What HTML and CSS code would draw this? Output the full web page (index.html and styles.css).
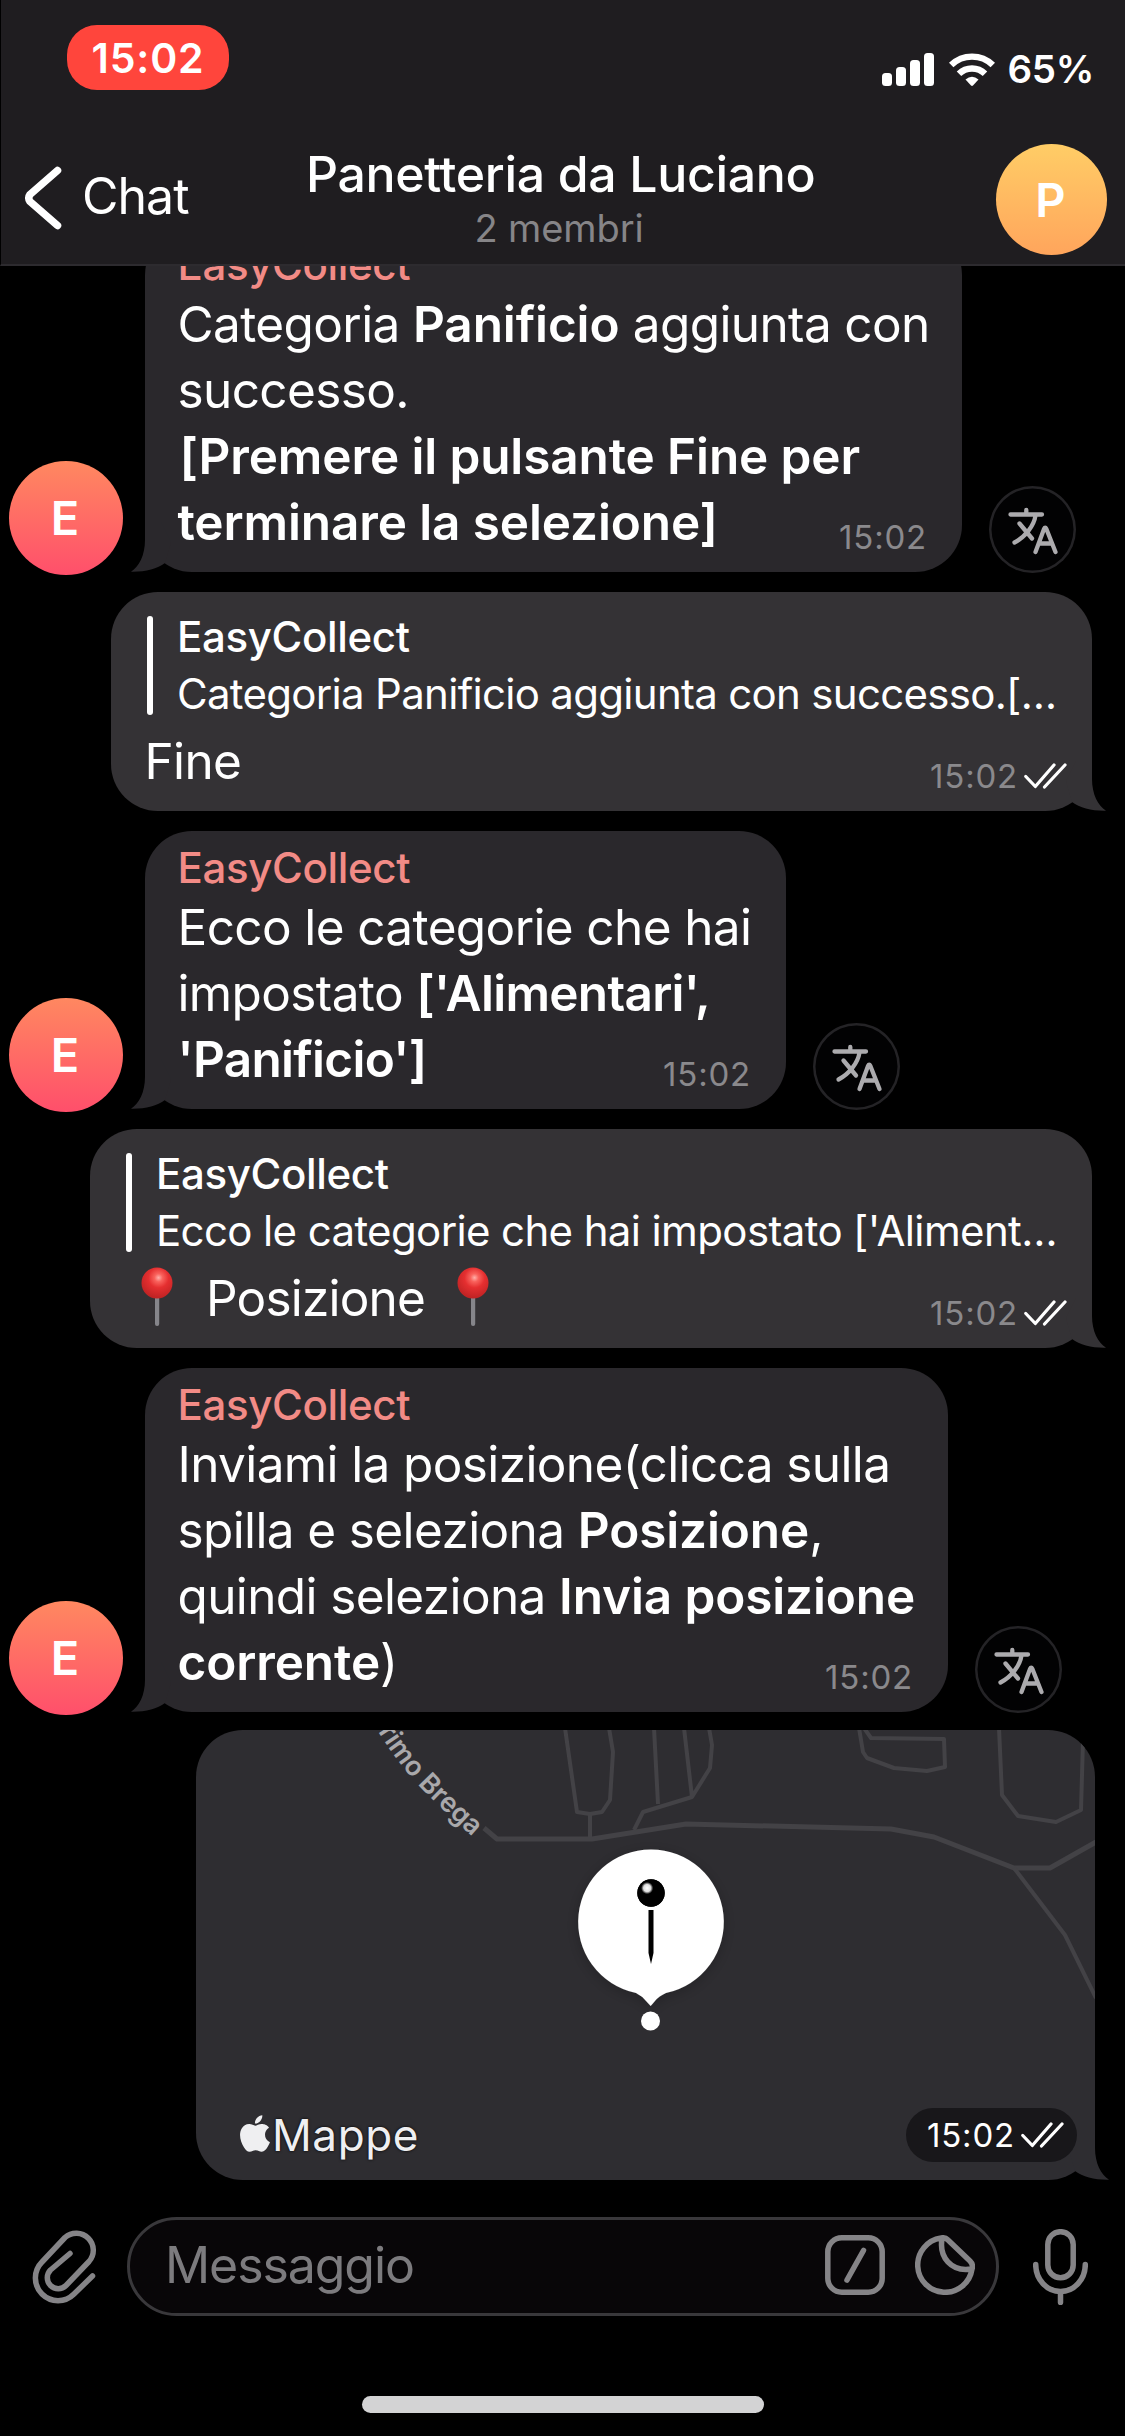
FILE: index.html
```html
<!DOCTYPE html>
<html lang="it">
<head>
<meta charset="utf-8">
<title>Panetteria da Luciano</title>
<link rel="stylesheet" href="styles.css">
</head>
<body>
<svg class="defs" aria-hidden="true">
  <symbol id="tail" viewBox="0 0 40 50"><path d="M14 0V18C14 33 8 45 0 49.7C14 50 26 47 34 41L40 20L30 0Z"/></symbol>
  <symbol id="checks" viewBox="0 0 43 26"><path d="M1.8 13.5L11.3 23.5L30 2M20.5 24L41 2" fill="none" stroke="#fff" stroke-width="3.2" stroke-linecap="round" stroke-linejoin="round"/></symbol>
  <symbol id="translate" viewBox="0 0 87 87"><g fill="none" stroke="#acabae" stroke-width="4.3" stroke-linecap="round" stroke-linejoin="round"><path d="M21.5 28.5H53M37.3 24V28M46.5 29.5C45 40 36 51 25.5 56.5M30.5 37.5L43 52.5M46.5 66L55 43Q56.2 40.5 57.4 43L66.5 66M50 57.5H63"/></g></symbol>
  <symbol id="pin" viewBox="0 0 32 60"><rect x="14" y="28" width="4.200" height="31" rx="2" fill="#85858a"/><circle cx="16" cy="16" r="15.500" fill="url(#pinRed)"/></symbol>
  <defs>
    <radialGradient id="pinRed" cx=".55" cy=".33" r=".65"><stop offset="0" stop-color="#ffb0aa"/><stop offset=".2" stop-color="#f9625c"/><stop offset=".5" stop-color="#e52f30"/><stop offset="1" stop-color="#c02324"/></radialGradient>
  </defs>
</svg>

<div class="screen">
  <header class="top">
    <div class="status">
      <span class="clock">15:02</span>
      <div class="indicators">
        <svg class="signal" viewBox="0 0 53 33" fill="#fff"><rect y="20" width="10" height="13" rx="3.500"/><rect x="14" y="14" width="10" height="19" rx="3.500"/><rect x="28" y="7" width="10" height="26" rx="3.500"/><rect x="42" width="10" height="33" rx="3.500"/></svg>
        <svg class="wifi" viewBox="0 0 46 34" fill="none" stroke="#fff" stroke-width="6.400"><path d="M2.200 12A30 30 0 0 1 43.800 12"/><path d="M10 20.800A18.500 18.500 0 0 1 36 20.800"/><path d="M16.500 26.500Q23 21 29.500 26.500L24 32.500Q23 33.300 22 32.500Z" fill="#fff" stroke="none"/></svg>
        <span class="battery">65%</span>
      </div>
    </div>
    <div class="nav">
      <div class="back">
        <svg viewBox="0 0 38 64"><path d="M33.500 4.500L6 28.500Q3.500 32 6 35.500L33.500 59.500" fill="none" stroke="#fff" stroke-width="7.500" stroke-linecap="round" stroke-linejoin="round"/></svg>
        <span>Chat</span>
      </div>
      <div class="heading">
        <h1>Panetteria da Luciano</h1>
        <p>2 membri</p>
      </div>
      <div class="avatar group">P</div>
    </div>
  </header>

  <main class="chat">
    <div class="row in">
      <div class="avatar">E</div>
      <div class="bubble w1">
        <svg class="tail"><use href="#tail"/></svg>
        <div class="author">EasyCollect</div>
        <div class="line">Categoria <b>Panificio</b> aggiunta con</div>
        <div class="line">successo.</div>
        <div class="line bracket"><b>[Premere il pulsante Fine per</b></div>
        <div class="line last"><b>terminare la selezione]</b><time>15:02</time></div>
      </div>
      <div class="translate"><svg><use href="#translate"/></svg></div>
    </div>

    <div class="row out">
      <div class="bubble w2">
        <svg class="tail"><use href="#tail"/></svg>
        <div class="quote"><div class="quote-name">EasyCollect</div><div class="quote-text">Categoria Panificio aggiunta con successo.[…</div></div>
        <div class="line last"><span>Fine</span><div class="meta"><time>15:02</time><svg class="checks"><use href="#checks"/></svg></div></div>
      </div>
    </div>

    <div class="row in">
      <div class="avatar">E</div>
      <div class="bubble w3">
        <svg class="tail"><use href="#tail"/></svg>
        <div class="author">EasyCollect</div>
        <div class="line">Ecco le categorie che hai</div>
        <div class="line">impostato <b class="tight">['Alimentari',</b></div>
        <div class="line last"><b class="tight">'Panificio']</b><time>15:02</time></div>
      </div>
      <div class="translate"><svg><use href="#translate"/></svg></div>
    </div>

    <div class="row out">
      <div class="bubble w4">
        <svg class="tail"><use href="#tail"/></svg>
        <div class="quote"><div class="quote-name">EasyCollect</div><div class="quote-text wide">Ecco le categorie che hai impostato ['Aliment…</div></div>
        <div class="line last"><div class="pinned"><svg><use href="#pin"/></svg><span>Posizione</span><svg><use href="#pin"/></svg></div><div class="meta"><time>15:02</time><svg class="checks"><use href="#checks"/></svg></div></div>
      </div>
    </div>

    <div class="row in">
      <div class="avatar">E</div>
      <div class="bubble w5">
        <svg class="tail"><use href="#tail"/></svg>
        <div class="author">EasyCollect</div>
        <div class="line">Inviami la posizione(clicca sulla</div>
        <div class="line">spilla e seleziona <b>Posizione</b>,</div>
        <div class="line">quindi seleziona <b>Invia posizione</b></div>
        <div class="line last"><span><b>corrente</b>)</span><time>15:02</time></div>
      </div>
      <div class="translate"><svg><use href="#translate"/></svg></div>
    </div>

    <div class="row out location">
      <div class="bubble map">
        <svg class="tail"><use href="#tail"/></svg>
        <svg class="streets" viewBox="0 0 899 450">
          <defs>
            <path id="street" d="M171 -17Q200 34 234 67T300 127"/>
            <radialGradient id="head" cx=".36" cy=".32" r=".22"><stop offset="0" stop-color="#fff"/><stop offset=".6" stop-color="#ddd"/><stop offset="1" stop-color="#000"/></radialGradient>
            <filter id="soft" x="-30%" y="-30%" width="160%" height="160%"><feDropShadow dx="0" dy="3" stdDeviation="7" flood-color="#000" flood-opacity=".22"/></filter>
          </defs>
          <g fill="none" stroke="#434246" stroke-linejoin="round">
            <path stroke-width="5" d="M288 98L301 109H396L490 94L695 99L738 107L818 138H854L900 112"/>
            <path stroke-width="4" d="M818 138L869 205L900 268M369 -2L381 82L394 84L406 82L414 70L417 22L413 -2M394 84V109M458 -2L462 74M488 -2L496 67M513 -2L516 15L514 38L496 67L447 82L438 100M663 -2L667 22L671 28L698 38L731 41L749 37L748 9L675 8L668 -2M803 -2L806 65L822 86L860 92L885 80L887 10"/>
          </g>
          <text class="street-name"><textPath href="#street" startOffset="4">Primo Brega</textPath></text>
          <g filter="url(#soft)"><path d="M455 119.500A72.500 72.500 0 0 1 470 263Q463 266 459 271L454.700 276L450 271Q446 266 440 263A72.500 72.500 0 0 1 455 119.500Z" fill="#fff"/></g>
          <circle cx="455" cy="163" r="13.700"/><circle cx="455" cy="163" r="13.700" fill="url(#head)"/>
          <path d="M452.500 180H457.500V223L455 234L452.500 223Z"/>
          <circle cx="454.500" cy="291" r="9.500" fill="#fff"/>
        </svg>
        <div class="map-bar">
          <div class="brand"><svg viewBox="2.200 0 19.600 24"><path fill="#efeff1" d="M12.152 6.896c-.948 0-2.415-1.078-3.960-1.040-2.040.027-3.910 1.183-4.961 3.014-2.117 3.675-.546 9.103 1.519 12.090 1.013 1.454 2.208 3.090 3.792 3.039 1.520-.065 2.090-.987 3.935-.987 1.831 0 2.350.987 3.960.948 1.637-.026 2.676-1.480 3.676-2.948 1.156-1.688 1.636-3.325 1.662-3.415-.039-.013-3.182-1.221-3.220-4.857-.026-3.040 2.480-4.494 2.597-4.559-1.429-2.090-3.623-2.324-4.390-2.376-2-.156-3.675 1.090-4.610 1.090zM15.530 3.830c.843-1.012 1.400-2.427 1.245-3.830-1.207.052-2.662.805-3.532 1.818-.780.896-1.454 2.338-1.273 3.714 1.338.104 2.715-.688 3.559-1.701"/></svg><span>Mappe</span></div>
          <div class="stamp"><time>15:02</time><svg class="checks"><use href="#checks"/></svg></div>
        </div>
      </div>
    </div>
  </main>

  <footer class="composer">
    <svg class="clip" viewBox="0 0 68 80"><path d="M62.500 49L44 67A22.500 22.500 0 0 1 12 35L35 10.500A17 17 0 0 1 59 34.500L36 58.500A10.800 10.800 0 0 1 20.500 43L40 26.500"/></svg>
    <div class="field">
      <span>Messaggio</span>
      <svg viewBox="0 0 60 60"><rect x="2.800" y="2.800" width="54.400" height="54.400" rx="14"/><path d="M38.500 15.500L22 45"/></svg>
      <svg viewBox="0 0 60 60"><path d="M57 34A27.300 27.300 0 1 1 26 3Q30 2 33 5L55 26Q58.500 29.500 57 34ZM27 4C24 22 36 37 56 34"/></svg>
    </div>
    <svg class="mic" viewBox="0 0 55 76"><rect x="14.800" y="2.700" width="25.400" height="46" rx="12.700"/><path d="M2.700 35.500A24.800 27 0 0 0 52.300 35.500M27.500 62.500V73.500"/></svg>
  </footer>
  <div class="home"></div>
</div>
</body>
</html>
```
FILE: styles.css
```css
* { box-sizing: border-box; margin: 0; padding: 0; }
body { background: #000; color: #fff; font-family: Inter, "Liberation Sans", sans-serif; }
svg { display: block; flex: none; }
.defs { position: absolute; width: 0; height: 0; }
.screen { width: 1125px; height: 2436px; display: flex; flex-direction: column; overflow: hidden; background: #000; }

/* Header */
.top { height: 266px; flex: none; background: #1f1d20; border-bottom: 2px solid #2d2b2f; border-left: 1px solid #000; }
.status { display: flex; justify-content: space-between; align-items: flex-start; height: 144px; padding: 25px 31px 0 66px; }
.clock { width: 162px; height: 65px; border-radius: 30px; background: #ff453c; font-size: 41px; font-weight: 600; line-height: 66px; text-align: center; letter-spacing: .8px; }
.indicators { display: flex; align-items: center; height: 33px; margin-top: 28px; }
.signal { width: 53px; height: 33px; margin-right: 14px; }
.wifi { width: 46px; height: 34px; margin-right: 12px; }
.battery { font-size: 38.5px; font-weight: 600; line-height: 35px; letter-spacing: -.3px; }
.nav { display: flex; height: 120px; padding-left: 23px; padding-right: 18px; }
.back { display: flex; width: 282px; font-size: 50px; letter-spacing: -1px; line-height: 60px; padding-top: 22px; gap: 20px; }
.back svg { width: 38px; height: 64px; }
.heading { flex: none; width: 506px; text-align: center; }
.heading h1 { font-size: 50px; font-weight: 500; line-height: 60px; letter-spacing: -.35px; white-space: nowrap; }
.heading p { font-size: 38px; line-height: 46px; margin-top: 1px; color: #868588; letter-spacing: -.1px; }
.avatar { flex: none; width: 114px; height: 114px; padding-right: 2px; border-radius: 50%; background: linear-gradient(#ff8860, #ff4f6b); font-size: 47px; font-weight: 600; line-height: 114px; text-align: center; }
.avatar.group { width: 111px; height: 111px; line-height: 111px; margin-left: auto; background: linear-gradient(#ffcd66, #ffa55c); }

/* Conversation */
.chat { flex: none; height: 1931px; display: flex; flex-direction: column; justify-content: flex-end; gap: 20px; overflow: hidden; padding-bottom: 17px; }
.row { flex: none; display: flex; align-items: flex-end; }
.row.in { padding-left: 9px; margin-bottom: -3px; }
.row.in .bubble { background: #2a282c; fill: #2a282c; margin: 0 27px 3px 22px; padding: 11px 35px 17px 32.5px; }
.row.out { justify-content: flex-end; padding-right: 33px; }
.row.out .bubble { background: #343235; fill: #343235; padding: 16px 25px 17px 33.5px; }
.bubble { position: relative; border-radius: 47px; }
.tail { position: absolute; left: -14px; bottom: 0; width: 40px; height: 50px; }
.row.out .tail { left: auto; right: -14px; transform: scaleX(-1); }
.w1 { width: 817px; }
.w2 { width: 981px; }
.w3 { width: 641px; }
.w4 { width: 1002px; }
.w5 { width: 803px; }
.author { font-size: 42px; font-weight: 500; line-height: 52px; letter-spacing: -.35px; color: #f28b86; }
.line { font-size: 49.5px; line-height: 66px; height: 66px; letter-spacing: -.62px; white-space: nowrap; }
.line b { font-weight: 600; letter-spacing: -.12px; }
.line b.tight { letter-spacing: -.7px; }
.bracket { padding-left: 2px; }
.last { display: flex; justify-content: space-between; align-items: flex-end; }
time { font-size: 33px; line-height: 36px; letter-spacing: .8px; color: #8a898c; }
.meta { display: flex; align-items: flex-end; gap: 6px; }
.checks { width: 43px; height: 26px; margin-bottom: 5px; }
.quote { position: relative; height: 114px; margin-bottom: 6px; padding-left: 32.5px; }
.quote::before { content: ""; position: absolute; left: 2.5px; top: 8px; width: 6px; height: 99px; border-radius: 3px; background: #fff; }
.quote-name { font-size: 42px; font-weight: 500; line-height: 57px; letter-spacing: -.35px; }
.quote-text { font-size: 42px; line-height: 57px; letter-spacing: -.7px; white-space: nowrap; }
.quote-text.wide { letter-spacing: -.63px; }
.pinned { display: flex; padding-left: 17.5px; letter-spacing: -.8px; }
.pinned svg { width: 32px; height: 60px; margin-top: 2px; }
.pinned span { margin: 0 32px 0 33px; }
.translate { flex: none; width: 87px; height: 87px; border-radius: 50%; margin-bottom: 2px; background: #020203; box-shadow: inset 0 0 0 2.5px #242326; }
.translate svg { width: 87px; height: 87px; }

/* Shared location */
.row.location { padding-right: 30px; margin-top: -2px; }
.row.out .map { width: 899px; height: 450px; padding: 0; background: #2e2d31; fill: #2e2d31; }
.map .tail { right: -12px; }
.streets { width: 899px; height: 450px; border-radius: 47px; overflow: hidden; fill: #000; }
.street-name { font-size: 27px; font-weight: 600; letter-spacing: 0; fill: #a9a8ab; }
.map-bar { position: absolute; left: 44px; right: 18px; bottom: 18px; display: flex; align-items: center; justify-content: space-between; }
.brand { display: flex; align-items: flex-end; font-size: 44px; line-height: 54px; letter-spacing: .6px; color: #efeff1; text-shadow: 0 0 3px #000; }
.brand svg { width: 30px; height: 37px; margin: 0 2px 10px 0; }
.stamp { display: flex; align-items: center; width: 171px; height: 54px; border-radius: 27px; padding-left: 21px; gap: 6px; background: #18171a; }
.stamp time { color: #fff; }
.stamp .checks { margin: 0; }

/* Message composer */
.composer { flex: none; display: flex; align-items: center; height: 99px; margin-top: 20px; padding-left: 30px; fill: none; stroke: #858487; stroke-width: 5.5; stroke-linecap: round; stroke-linejoin: round; }
.clip { width: 68px; height: 80px; }
.field { display: flex; align-items: center; width: 872px; height: 99px; margin-left: 29px; padding: 0 21px 3px 35px; border: 3px solid #39383b; border-radius: 50px; background: #080608; }
.field span { flex: 1; font-size: 50px; letter-spacing: -1.08px; color: #7c7b7e; }
.field svg { width: 60px; height: 60px; margin-left: 30px; }
.mic { width: 55px; height: 76px; margin-left: 34px; }
.home { flex: none; width: 402px; height: 17px; margin: 80px auto 0; border-radius: 9px; background: #d3d3d4; }
```
